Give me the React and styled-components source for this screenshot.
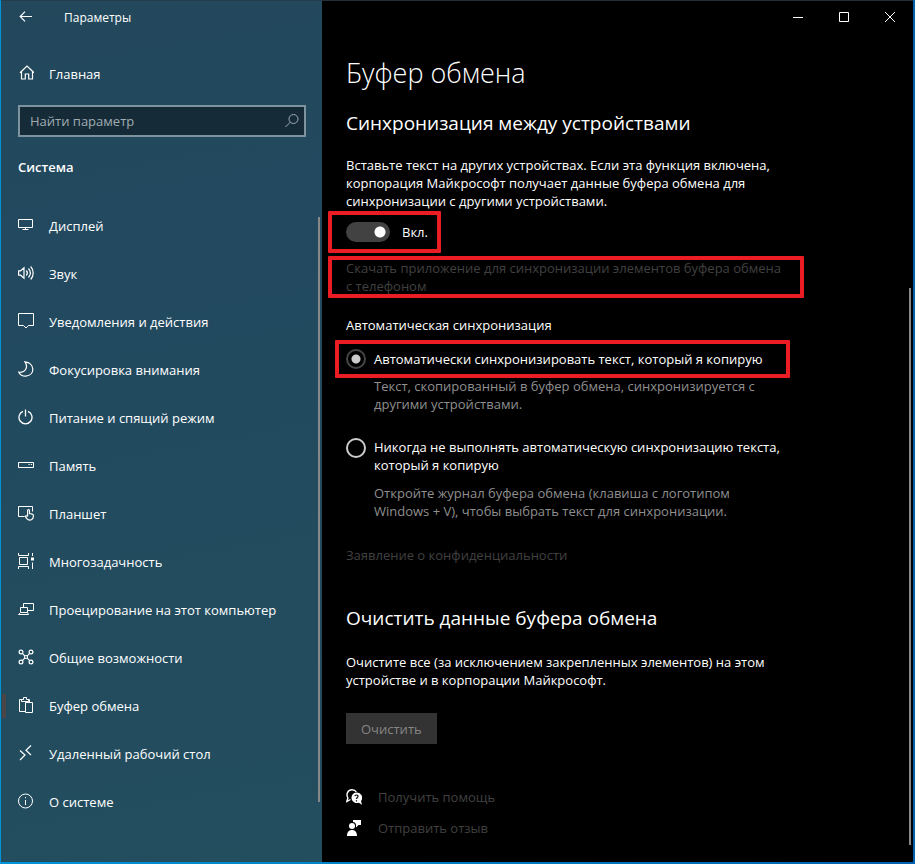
import React, { useState } from "react";
import styled, { createGlobalStyle } from "styled-components";

const GlobalStyle = createGlobalStyle`
  * {
    box-sizing: border-box;
  }

  body {
    margin: 0;
    background: #000;
    color: #fff;
    font-family: "Open Sans", "Noto Sans", sans-serif;
    font-size: 13px;
    line-height: 18px;
  }

  h1, h2, h3, p, ul {
    margin: 0;
    padding: 0;
    font-weight: 400;
  }

  button, input {
    font: inherit;
    color: inherit;
  }
`;

/* the padding shows the accent coloured window frame */
const Window = styled.div`
  min-height: 100vh;
  padding: 0 2px 2px 1px;
  display: flex;
  background: linear-gradient(to right, #0095d8, #0078bd 60%, #0061ae);
`;

const Sidebar = styled.aside`
  flex: 0 0 321px;
  display: flex;
  flex-direction: column;
  border-top: 1px solid #263c4c;
  background: linear-gradient(170deg, #23485c, #22495f 30%, #234e5e);
`;

const SidebarHeader = styled.header`
  height: 34px;
  display: flex;
  align-items: center;
  font-size: 12px;
`;

const BackButton = styled.button`
  width: 48px;
  height: 32px;
  margin-right: 15px;
  padding: 2px 0 0 2px;
  border: 0;
  background: none;
`;

const NavLink = styled.a`
  height: 48px;
  padding-left: 17px;
  position: relative;
  display: flex;
  align-items: center;
  gap: 15px;
  color: #fff;
  text-decoration: none;

  svg {
    margin-bottom: 2px;
  }

  &::before {
    content: "";
    position: absolute;
    left: 1px;
    width: 4px;
    height: 24px;
    background: ${(props) => (props.$active ? "#4a4547" : "transparent")};
  }
`;

const HomeLink = styled(NavLink)`
  margin-top: 15px;
`;

const SearchBox = styled.label`
  height: 32px;
  margin: 7px 16px 0 17px;
  padding: 0 4px 0 10px;
  display: flex;
  align-items: center;
  border: 2px solid #7d949f;
  background: #152b38;
  color: #a0abb1;
`;

const SearchInput = styled.input`
  flex: 1;
  min-width: 0;
  padding: 0;
  border: 0;
  outline: 0;
  background: none;

  &::placeholder {
    color: #a0abb1;
    opacity: 1;
  }
`;

const GroupTitle = styled.h2`
  margin: 21px 0 0 17px;
  font-size: 13px;
  font-weight: 600;
`;

const Nav = styled.nav`
  margin-top: 26px;
  padding-bottom: 34px;
  position: relative;

  ul {
    list-style: none;
  }
`;

/* thin overlay scrollbar */
const Thumb = styled.div`
  position: absolute;
  top: ${(props) => props.$top};
  right: 2px;
  bottom: ${(props) => props.$bottom};
  width: 2px;
  background: #888;
`;

const Content = styled.main`
  flex: 1;
  min-width: 0;
  position: relative;
  border-top: 1px solid #22303c;
  background: #000;
`;

const WindowControls = styled.div`
  display: flex;
  justify-content: flex-end;
`;

const ControlButton = styled.button`
  width: 46px;
  height: 32px;
  padding: 0;
  display: flex;
  align-items: center;
  justify-content: center;
  border: 0;
  background: none;
`;

const Page = styled.div`
  max-width: 520px;
  padding: 22px 24px 12px;
`;

const Title = styled.h1`
  font-size: 27px;
  font-weight: 300;
  line-height: 36px;
`;

const Subtitle = styled.h2`
  margin-top: ${(props) => props.$top};
  font-size: 19px;
  line-height: 28px;
`;

const Text = styled.p`
  max-width: 444px;
  margin-top: ${(props) => props.$top};
`;

const Highlight = styled.div`
  width: ${(props) => props.$width};
  height: ${(props) => props.$height};
  margin: ${(props) => props.$margin};
  padding: 0 ${(props) => props.$inset};
  display: flex;
  align-items: center;
  border-radius: 1px;
  outline: 4px solid #ec1c24;
  outline-offset: -4px;
`;

const Row = styled.label`
  display: flex;
  align-items: ${(props) => props.$align || "center"};
  gap: ${(props) => props.$gap || "8px"};
`;

const Toggle = styled.input`
  appearance: none;
  width: 44px;
  height: 20px;
  margin: 0;
  border-radius: 10px;
  background: radial-gradient(
      circle at ${(props) => (props.checked ? "34px" : "10px")} 10px,
      #fff 5px,
      transparent 6px
    )
    #424242;
`;

const Radio = styled.input`
  appearance: none;
  flex: none;
  width: 20px;
  height: 20px;
  margin: 0;
  border: 2px solid ${(props) => (props.checked ? "#454545" : "#ccc")};
  border-radius: 50%;
  background: ${(props) =>
    props.checked
      ? "radial-gradient(circle, #ccc 4px, transparent 5px)"
      : "none"};
`;

const FieldTitle = styled.h3`
  margin-top: 18px;
  font-size: 13px;
`;

const Hint = styled.p`
  max-width: 428px;
  margin: ${(props) => props.$margin};
  padding-left: 28px;
  color: #8f8f8f;
`;

const MutedLink = styled.a`
  display: inline-flex;
  align-items: center;
  gap: 16px;
  color: #404040;
  text-decoration: none;
`;

const Privacy = styled.p`
  margin-top: 26px;
`;

const ClearButton = styled.button`
  height: 31px;
  margin-top: 24px;
  padding: 0 15px;
  display: block;
  border: 0;
  background: #333;
  color: #858585;
`;

const Footer = styled.footer`
  margin-top: 38px;
  display: flex;
  flex-direction: column;
  align-items: flex-start;
  gap: 1px;

  a {
    height: 30px;
  }
`;

function Icon({ children, size = 16 }) {
  return (
    <svg
      width={size}
      height={size}
      viewBox={`0 0 ${size} ${size}`}
      fill="none"
      stroke="currentColor"
      strokeWidth="1"
      aria-hidden="true"
    >
      {children}
    </svg>
  );
}

const icons = {
  home: <path strokeWidth="1.2" d="M2 8.2 9 1.5l7 6.7M3.5 7v7.5h3.8V9.5h3.4v5h3.8V7" />,
  display: <path d="M.5 2.5h14v8H.5zM7.5 10.5v2M4.5 12.5h6" />,
  sound: (
    <path
      strokeWidth="1.2"
      d="M.6 5.8h2L6 2.8v10.4l-3.4-3H.6zM8.3 5.5c1.3 1.5 1.3 3.5 0 5M10.5 3.5c2.3 2.700 2.3 6.3 0 9M12.7 1.5c3.3 3.7 3.3 9.3 0 13"
    />
  ),
  message: <path d="M.5 .5h15v12h-5L8 15l-2.5-2.5h-5z" />,
  moon: <path strokeWidth="1.2" d="M7 .8c10 1 10.5 13.5.8 14.4C4.5 15.3 2 13.5.8 11.2 7.5 11.8 10.5 6 7 .8z" />,
  power: <path strokeWidth="1.3" d="M7.5 .5v7M5 2.3a6.5 6.5 0 1 0 5 0" />,
  storage: (
    <>
      <path d="M.5 5.5h15v5H.5z" />
      <path strokeWidth="1.2" d="M10.5 7.5h1.2M12.8 7.5H14" />
    </>
  ),
  tablet: (
    <>
      <path d="M6.5 11.5h-6v-10h14v5" />
      <path
        strokeWidth="1.2"
        d="M9.6 11.5V5.5c0-1.3 1.9-1.3 1.9 0v3l2.8.6c.8.2 1.1.7 1.1 1.4 0 3-1.3 4.7-3.5 4.7-2.3 0-3-1-4.7-4 .7-.8 1.6-.4 2.4.3"
      />
    </>
  ),
  multitask: (
    <>
      <path d="M.5 0v2.500h10V0M1.500 4.500h8v7h-8zM.5 16v-2.500h10V16M14.500 0v3M14.500 9.500V16" />
      <path fill="currentColor" stroke="none" d="M13 4.500h3v3h-3z" />
    </>
  ),
  project: <path d="M5.5 6.5v-4h10v7h-6M2.5 6.5h7v5h-7zM2.5 11.5l-2 2h10l-1-2" />,
  shared: (
    <g strokeWidth="1.2">
      <circle cx="3" cy="3" r="1.9" />
      <circle cx="13" cy="3" r="1.9" />
      <circle cx="3" cy="13" r="1.9" />
      <circle cx="13" cy="13" r="1.9" />
      <circle cx="8" cy="8" r="1.5" />
      <path d="m4.3 4.3 2.5 2.5M11.7 4.3 9.2 6.8M4.3 11.7l2.5-2.5M11.7 11.7 9.2 9.2" />
    </g>
  ),
  clipboard: (
    <path d="M7.5 14.5h-6v-12h3M9.5 2.5h2v3M3.5 4.5v-2h2v-2h3v2h2v2zM7.5 5.5h7v10h-7z" />
  ),
  remote: <path strokeWidth="1.2" d="m2 5.5 5 4.500-5 5M13 .5 8 5.3l5 4.700" />,
  info: (
    <>
      <circle cx="7.5" cy="8" r="7" />
      <path d="M7.5 7v5M7.5 4v1.2" />
    </>
  ),
};

const items = [
  { icon: "display", label: "Дисплей" },
  { icon: "sound", label: "Звук" },
  { icon: "message", label: "Уведомления и действия" },
  { icon: "moon", label: "Фокусировка внимания" },
  { icon: "power", label: "Питание и спящий режим" },
  { icon: "storage", label: "Память" },
  { icon: "tablet", label: "Планшет" },
  { icon: "multitask", label: "Многозадачность" },
  { icon: "project", label: "Проецирование на этот компьютер" },
  { icon: "shared", label: "Общие возможности" },
  { icon: "clipboard", label: "Буфер обмена", active: true },
  { icon: "remote", label: "Удаленный рабочий стол" },
  { icon: "info", label: "О системе" },
];

function SettingsNav() {
  return (
    <Sidebar>
      <SidebarHeader>
        <BackButton aria-label="Назад">
          <Icon>
            <path strokeWidth="1.2" d="M14 7.5H2.5M7 2.7 2.2 7.5 7 12.3" />
          </Icon>
        </BackButton>
        Параметры
      </SidebarHeader>
      <HomeLink href="#home">
        <Icon>
          <g transform="translate(0 -.5)">{icons.home}</g>
        </Icon>
        Главная
      </HomeLink>
      <SearchBox>
        <SearchInput type="text" placeholder="Найти параметр" aria-label="Найти параметр" />
        <Icon>
          <circle cx="9.5" cy="6" r="4.5" />
          <path d="M6.3 9.2 1.5 14" />
        </Icon>
      </SearchBox>
      <GroupTitle>Система</GroupTitle>
      <Nav>
        <ul>
          {items.map((item) => (
            <li key={item.icon}>
              <NavLink href={`#${item.icon}`} $active={item.active}>
                <Icon>{icons[item.icon]}</Icon>
                {item.label}
              </NavLink>
            </li>
          ))}
        </ul>
        <Thumb $top="15px" $bottom="58px" />
      </Nav>
    </Sidebar>
  );
}

export default function App() {
  const [sync, setSync] = useState(true);
  const [mode, setMode] = useState("auto");

  return (
    <>
      <GlobalStyle />
      <Window>
        <SettingsNav />
        <Content>
          <WindowControls>
            <ControlButton aria-label="Свернуть">
              <Icon size={10}>
                <path d="M0 5.5h10" />
              </Icon>
            </ControlButton>
            <ControlButton aria-label="Развернуть">
              <Icon size={10}>
                <path d="M.5 .5h9v9h-9z" />
              </Icon>
            </ControlButton>
            <ControlButton aria-label="Закрыть">
              <Icon size={10}>
                <path d="m0 0 10 10M10 0 0 10" />
              </Icon>
            </ControlButton>
          </WindowControls>
          <Page>
            <Title>Буфер обмена</Title>
            <Subtitle $top="18px">Синхронизация между устройствами</Subtitle>
            <Text $top="19px">
              Вставьте текст на других устройствах. Если эта функция включена,
              корпорация Майкрософт получает данные буфера обмена для
              синхронизации с другими устройствами.
            </Text>
            <Highlight $width="113px" $height="42px" $margin="1px 0 0 -18px" $inset="18px">
              <Row $gap="12px">
                <Toggle
                  type="checkbox"
                  role="switch"
                  checked={sync}
                  onChange={() => setSync(!sync)}
                />
                {sync ? "Вкл." : "Откл."}
              </Row>
            </Highlight>
            <Highlight $width="476px" $height="42px" $margin="3px 0 0 -18px" $inset="16px 0 18px">
              <MutedLink href="#phone">
                Скачать приложение для синхронизации элементов буфера обмена с
                телефоном
              </MutedLink>
            </Highlight>
            <FieldTitle>Автоматическая синхронизация</FieldTitle>
            <Highlight $width="455px" $height="38px" $margin="6px 0 0 -11px" $inset="11px">
              <Row>
                <Radio
                  type="radio"
                  name="mode"
                  checked={mode === "auto"}
                  onChange={() => setMode("auto")}
                />
                Автоматически синхронизировать текст, который я копирую
              </Row>
            </Highlight>
            <Hint $margin="-1px 0 25px">
              Текст, скопированный в буфер обмена, синхронизируется с другими
              устройствами.
            </Hint>
            <Row $align="flex-start">
              <Radio
                type="radio"
                name="mode"
                checked={mode === "never"}
                onChange={() => setMode("never")}
              />
              Никогда не выполнять автоматическую синхронизацию текста, который
              я копирую
            </Row>
            <Hint $margin="10px 0 0">
              Откройте журнал буфера обмена (клавиша с логотипом Windows + V),
              чтобы выбрать текст для синхронизации.
            </Hint>
            <Privacy>
              <MutedLink href="#privacy">Заявление о конфиденциальности</MutedLink>
            </Privacy>
            <Subtitle $top="40px">Очистить данные буфера обмена</Subtitle>
            <Text $top="21px">
              Очистите все (за исключением закрепленных элементов) на этом
              устройстве и в корпорации Майкрософт.
            </Text>
            <ClearButton disabled>Очистить</ClearButton>
            <Footer>
              <MutedLink href="#help">
                <svg width="16" height="16" viewBox="0 0 16 16" aria-hidden="true">
                  <path
                    fill="none"
                    stroke="#fff"
                    strokeWidth="1.4"
                    d="M4.5 10.5.8 12.5l1.1-3.5C-.3 5 2 .8 6 .8c2 0 3.5.8 4.3 2.2"
                  />
                  <path
                    fill="#fff"
                    d="M10.5 3.5a5.3 5.3 0 1 0 2.3 10.2L16 15.8l-1-3.7A5.3 5.3 0 0 0 10.5 3.5z"
                  />
                  <path
                    fill="none"
                    stroke="#000"
                    strokeWidth="1.2"
                    d="M8.8 7.2c.3-1.8 3.5-1.5 3.2.3-.2 1-1.5 1-1.5 2.5M10.5 11.2v1.2"
                  />
                </svg>
                Получить помощь
              </MutedLink>
              <MutedLink href="#feedback">
                <svg width="16" height="16" viewBox="0 0 16 16" fill="#fff" aria-hidden="true">
                  <circle cx="6" cy="6" r="3" />
                  <path d="M1 16c0-4 2-6 5-6s5 2 5 6zM7 0h8v5h-2.5L10 7.5V4.5C9.5 3 8.5 2.3 7 2z" />
                </svg>
                Отправить отзыв
              </MutedLink>
            </Footer>
          </Page>
          <Thumb $top="287px" $bottom="17px" />
        </Content>
      </Window>
    </>
  );
}
